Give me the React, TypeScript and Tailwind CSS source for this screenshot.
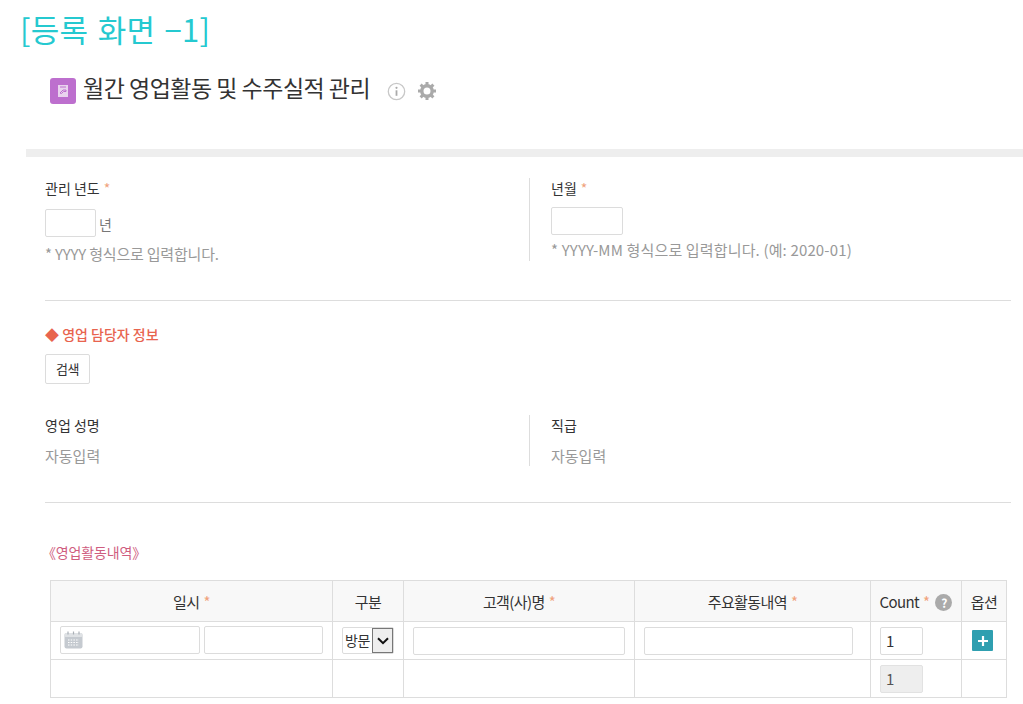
import React from 'react'

const Star = () => <span className="text-[#f0a27c] ml-1">*</span>

const Field = ({ className }: { className: string }) => (
  <div className={`h-[28px] bg-white border border-[#dcdcdc] rounded-[2px] ${className}`} />
)

const Th = ({ children, className = '' }: { children: React.ReactNode; className?: string }) => (
  <th className={`border border-[#dddddd] bg-[#f8f8f8] font-normal text-[15px] text-[#333] tracking-[-0.6px] text-center p-0 pt-[3px] ${className}`}>
    {children}
  </th>
)

const Td = ({ children, className = '' }: { children?: React.ReactNode; className?: string }) => (
  <td className={`border border-[#dddddd] p-0 px-[9px] ${className}`}>{children}</td>
)

export default function App() {
  return (
    <div className="w-[1023px] h-[704px] overflow-hidden bg-white text-[14px] text-[#333] font-['Noto_Sans_CJK_KR','Noto_Sans',sans-serif]">
      <div className="pl-[20px] pt-[8px] h-[50px] text-[31px] leading-[42px] text-[#25c9d0] tracking-[0.3px] [word-spacing:2px]">[등록 화면 −1]</div>

      <div className="flex items-center h-[60px] pl-[50px] mt-[8px]">
        <div className="w-[26px] h-[26px] mt-[6px] rounded-[3px] bg-[#bd6fce] flex items-center justify-center">
          <svg width="12" height="14" viewBox="0 0 12 14">
            <path d="M1 1h10v12H1z" fill="#e9d3ee" />
            <path d="M3 9l3-3h3v1.500H6.500L4.500 9.500zM3 3h6" stroke="#bd6fce" strokeWidth="1" fill="none" />
          </svg>
        </div>
        <h1 className="ml-[7px] mb-[3px] text-[23px] leading-[30px] text-[#333] tracking-[-0.5px] font-normal">월간 영업활동 및 수주실적 관리</h1>
        <svg className="ml-[17px] mt-[6px]" width="19" height="19" viewBox="0 0 19 19">
          <circle cx="9.500" cy="9.500" r="8.200" fill="none" stroke="#c8c8c8" strokeWidth="1.300" />
          <circle cx="9.500" cy="5.800" r="1.100" fill="#aaa" />
          <path d="M9.500 8.300v5.500" stroke="#aaa" strokeWidth="1.800" />
        </svg>
        <svg className="ml-[11px] mt-[6px]" width="20" height="20" viewBox="0 0 20 20">
          <circle cx="10" cy="10" r="5.200" fill="none" stroke="#aaa" strokeWidth="3.400" />
          <path d="M10 1v3M10 16v3M1 10h3M16 10h3M3.600 3.600l2.200 2.200M14.200 14.200l2.200 2.200M3.600 16.400l2.200-2.200M14.200 5.800l2.200-2.200" stroke="#aaa" strokeWidth="3" />
        </svg>
      </div>

      <div className="ml-[26px] mt-[31px] h-[8px] bg-[#eeeeee]" />

      <div className="ml-[45px] mr-[12px]">
        <div className="flex pt-[21px] h-[144px] border-b border-[#dddddd]">
          <div className="w-[484px]">
            <div className="h-[20px] leading-[20px]">관리 년도<Star /></div>
            <div className="flex items-center mt-[11px] text-[#777]">
              <Field className="w-[51px]" />
              <span className="ml-[3px] mt-[3px]">년</span>
            </div>
            <div className="mt-[7px] leading-[20px] text-[15px] text-[#999] tracking-[-0.2px]">* YYYY 형식으로 입력합니다.</div>
          </div>
          <div className="border-l border-[#dddddd] pl-[21px] h-[83px]">
            <div className="h-[20px] leading-[20px]">년월<Star /></div>
            <Field className="w-[72px] mt-[9px]" />
            <div className="mt-[5px] leading-[20px] text-[15px] text-[#999] tracking-[0.15px]">* YYYY-MM 형식으로 입력합니다. (예: 2020-01)</div>
          </div>
        </div>

        <div className="h-[202px] border-b border-[#dddddd] pt-[23px]">
          <div className="h-[20px] leading-[20px] font-medium text-[#e8644f]">◆ 영업 담당자 정보</div>
          <button className="block mt-[10px] w-[45px] h-[30px] bg-white border border-[#dcdcdc] rounded-[2px] text-[13px] text-[#333] tracking-[-0.4px]">검색</button>
          <div className="flex mt-[31px]">
            <div className="w-[484px]">
              <div className="h-[20px] leading-[20px]">영업 성명</div>
              <div className="mt-[11px] leading-[20px] text-[15px] text-[#999]">자동입력</div>
            </div>
            <div className="border-l border-[#dddddd] pl-[21px] h-[51px]">
              <div className="h-[20px] leading-[20px]">직급</div>
              <div className="mt-[11px] leading-[20px] text-[15px] text-[#999]">자동입력</div>
            </div>
          </div>
        </div>

        <div className="ml-[-3px] mt-[39px] h-[20px] leading-[20px] text-[#cf5d80] tracking-[-0.15px]">《영업활동내역》</div>
      </div>

      <table className="ml-[50px] mt-[18px] w-[956px] table-fixed border-collapse">
        <colgroup>
          <col className="w-[282px]" />
          <col className="w-[71px]" />
          <col className="w-[231px]" />
          <col className="w-[236px]" />
          <col className="w-[91px]" />
          <col className="w-[45px]" />
        </colgroup>
        <thead>
          <tr className="h-[41px]">
            <Th>일시<Star /></Th>
            <Th>구분</Th>
            <Th>고객(사)명<Star /></Th>
            <Th>주요활동내역<Star /></Th>
            <Th>
              <span className="inline-flex items-center">
                Count<Star />
                <span className="ml-[6px] w-[17px] h-[17px] rounded-full bg-[#aaaaaa] text-white text-[12px] leading-[17px] font-bold">?</span>
              </span>
            </Th>
            <Th>옵션</Th>
          </tr>
        </thead>
        <tbody>
          <tr className="h-[38px]">
            <Td>
              <div className="flex gap-[4px] mb-[2px]">
                <div className="w-[141px] h-[28px] bg-white border border-[#dcdcdc] rounded-[2px] flex items-center pl-[3px]">
                  <svg width="19" height="18" viewBox="0 0 19 18">
                    <rect x="0.500" y="2" width="18" height="15.500" rx="2" fill="#c5cad0" />
                    <rect x="0.500" y="2" width="18" height="4" rx="1.500" fill="#dfe2e5" />
                    <path d="M4 0.500v3M9.500 0.500v3M15 0.500v3" stroke="#aab0b6" strokeWidth="1.200" />
                    <path d="M4 9h11M4 11.500h11M4 14h11" stroke="#fff" strokeWidth="1.200" strokeDasharray="1.500 1.200" />
                  </svg>
                </div>
                <Field className="w-[119px]" />
              </div>
            </Td>
            <Td>
              <div className="flex w-[52px] h-[27px] bg-white border border-[#dcdcdc] rounded-[2px]">
                <span className="flex-1 text-[14px] leading-[25px] pl-[2px] tracking-[-0.5px] text-[#333]">방문</span>
                <span className="w-[21px] h-[25px] bg-[#eeeeee] border border-[#777] flex items-center justify-center">
                  <svg width="12" height="8" viewBox="0 0 12 8"><path d="M1 1.200l5 5 5-5" fill="none" stroke="#111" strokeWidth="2" /></svg>
                </span>
              </div>
            </Td>
            <Td><Field className="w-[212px]" /></Td>
            <Td><Field className="w-[209px]" /></Td>
            <Td><div className="w-[43px] h-[28px] bg-white border border-[#dcdcdc] rounded-[2px] text-[15px] leading-[26px] pl-[5px] text-[#333]">1</div></Td>
            <Td>
              <div className="ml-[1px] w-[21px] h-[21px] bg-[#2f9fb0] rounded-[1px] flex items-center justify-center">
                <svg width="12" height="12" viewBox="0 0 12 12"><path d="M6 1v10M1 6h10" stroke="#fff" strokeWidth="2.200" /></svg>
              </div>
            </Td>
          </tr>
          <tr className="h-[38px]">
            <Td />
            <Td />
            <Td />
            <Td />
            <Td><div className="w-[43px] h-[28px] bg-[#eeeeee] border border-[#e2e2e2] rounded-[2px] text-[15px] leading-[26px] pl-[5px] text-[#555]">1</div></Td>
            <Td />
          </tr>
        </tbody>
      </table>
    </div>
  )
}
